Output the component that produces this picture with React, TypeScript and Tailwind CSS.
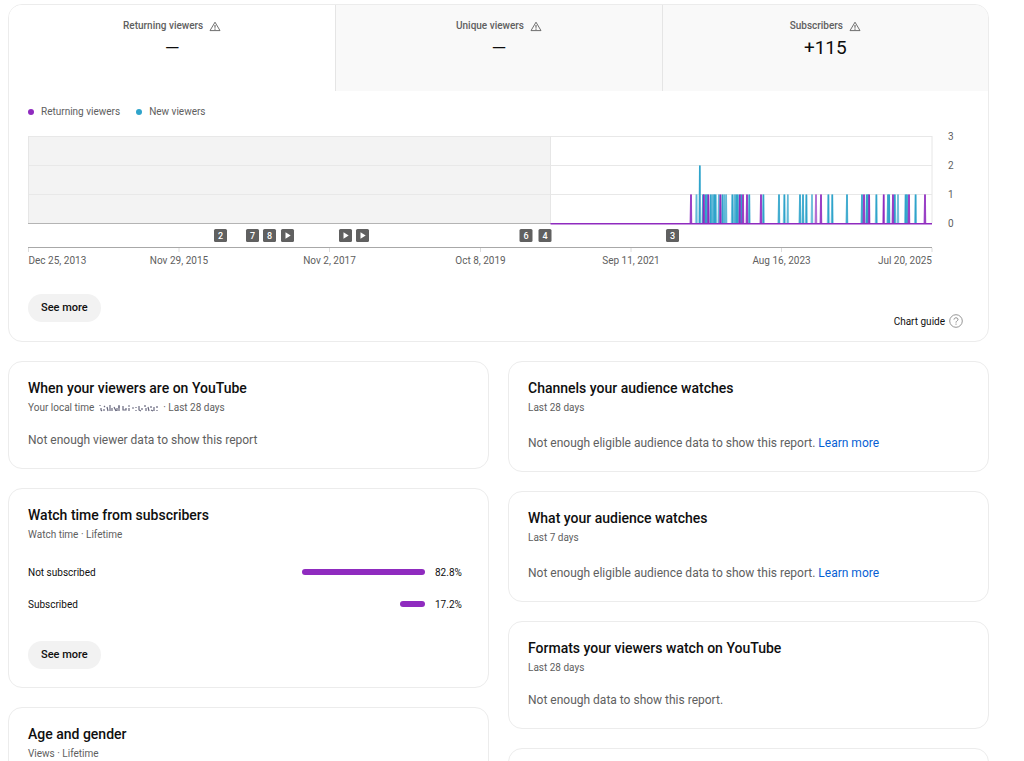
import type { ReactNode } from "react";

const PURPLE = "#8f2bbf";
const TEAL = "#2fa4cb";

type Spike = { x: number; v?: number; c: "p" | "t"; soft?: boolean };

const spikes: Spike[] = [
  { x: 663, c: "p" },
  { x: 668.5, c: "t", soft: true },
  { x: 671.8, c: "t", v: 2 },
  { x: 675, c: "t" },
  { x: 677.5, c: "t" },
  { x: 679, c: "t" },
  { x: 682.8, c: "t" },
  { x: 684.6, c: "t", soft: true },
  { x: 686.2, c: "t" },
  { x: 687.6, c: "t" },
  { x: 690.8, c: "t", soft: true },
  { x: 694.5, c: "t" },
  { x: 696.4, c: "t", soft: true },
  { x: 698.2, c: "t", soft: true },
  { x: 704.4, c: "t" },
  { x: 706.5, c: "t", soft: true },
  { x: 708.2, c: "t" },
  { x: 709.8, c: "t" },
  { x: 713.2, c: "t" },
  { x: 721.3, c: "t" },
  { x: 735.4, c: "t" },
  { x: 751, c: "t" },
  { x: 756.4, c: "t" },
  { x: 759.8, c: "t", soft: true },
  { x: 772, c: "t" },
  { x: 775, c: "t" },
  { x: 778.4, c: "t" },
  { x: 784, c: "t", soft: true },
  { x: 800.4, c: "t" },
  { x: 804.3, c: "t" },
  { x: 819, c: "t" },
  { x: 834, c: "t" },
  { x: 838.7, c: "t" },
  { x: 840, c: "t" },
  { x: 848.4, c: "t" },
  { x: 860, c: "t" },
  { x: 861.2, c: "t" },
  { x: 866.8, c: "t" },
  { x: 870, c: "t", soft: true },
  { x: 877.6, c: "t" },
  { x: 879, c: "t" },
  { x: 887.6, c: "t" },
  { x: 675.8, c: "p" },
  { x: 680.4, c: "p" },
  { x: 692.4, c: "p" },
  { x: 711.8, c: "p" },
  { x: 715, c: "p" },
  { x: 719, c: "p" },
  { x: 733, c: "p" },
  { x: 788, c: "p", soft: true },
  { x: 793, c: "p" },
  { x: 836, c: "p" },
  { x: 841.2, c: "p" },
  { x: 855.7, c: "p" },
  { x: 865, c: "p" },
  { x: 881, c: "p" },
  { x: 897, c: "p" },
];

const markers: { x: number; label?: string }[] = [
  { x: 192.5, label: "2" },
  { x: 224.5, label: "7" },
  { x: 241.5, label: "8" },
  { x: 259.5 },
  { x: 317.5 },
  { x: 334.5 },
  { x: 498, label: "6" },
  { x: 517, label: "4" },
  { x: 644.5, label: "3" },
];

const ticks: { x: number; label: string; anchor: "start" | "middle" | "end" }[] = [
  { x: 0.5, label: "Dec 25, 2013", anchor: "start" },
  { x: 151, label: "Nov 29, 2015", anchor: "middle" },
  { x: 301.5, label: "Nov 2, 2017", anchor: "middle" },
  { x: 452.5, label: "Oct 8, 2019", anchor: "middle" },
  { x: 603, label: "Sep 11, 2021", anchor: "middle" },
  { x: 753.5, label: "Aug 16, 2023", anchor: "middle" },
  { x: 904, label: "Jul 20, 2025", anchor: "end" },
];

const BASE = 93.5;
const UNIT = 29;

function Chart() {
  return (
    <svg viewBox="0 0 941 140" className="block w-full" role="img" aria-label="Returning and new viewers over time">
      <rect x="0" y="6" width="523" height="87" fill="#f3f3f3" />
      {[1, 2, 3].map((v) => (
        <line key={v} x1="0" x2="904" y1={BASE - v * UNIT} y2={BASE - v * UNIT} stroke="#e8e8e8" />
      ))}
      <path d="M0.5 6V93M522.5 6V93M904 6V93" stroke="#e6e6e6" fill="none" />
      <line x1="0" x2="523" y1={BASE} y2={BASE} stroke="#b4b4b4" />
      {spikes.map((s, i) => {
        const top = BASE - (s.v ?? 1) * UNIT;
        const color = s.c === "p" ? PURPLE : TEAL;
        return (
          <g key={i} fill={color} opacity={s.soft ? 0.75 : 1}>
            <path d={`M${s.x - 0.8} ${top}H${s.x + 0.8}V${BASE}H${s.x - 0.8}Z`} />
            <path d={`M${s.x - 0.8} ${top}L${s.x - 1.7} ${BASE}H${s.x + 1.4}L${s.x + 0.8} ${top}Z`} opacity="0.5" />
          </g>
        );
      })}
      <line x1="522.5" x2="904" y1="93.7" y2="93.7" stroke={PURPLE} strokeWidth="1.6" />
      {[0, 1, 2, 3].map((v) => (
        <text key={v} x="920" y={BASE - v * UNIT + 3.5} fontSize="10" fill="#606060">
          {v}
        </text>
      ))}
      {markers.map((m) => (
        <g key={m.x}>
          <rect x={m.x - 6.5} y="99" width="13" height="13" rx="1.5" fill="#606060" />
          {m.label ? (
            <text x={m.x} y="109" fontSize="9" fontWeight="500" textAnchor="middle" fill="#fff">
              {m.label}
            </text>
          ) : (
            <path d={`M${m.x - 2} 102.2V108.8L${m.x + 3.2} 105.5Z`} fill="#fff" />
          )}
        </g>
      ))}
      <line x1="0" x2="904" y1="117.5" y2="117.5" stroke="#a8a8a8" />
      {ticks.map((t) => (
        <g key={t.label}>
          <line x1={t.x} x2={t.x} y1="118" y2="122" stroke="#dcdcdc" />
          <text x={t.x} y="134" fontSize="10" textAnchor={t.anchor} fill="#606060">
            {t.label}
          </text>
        </g>
      ))}
    </svg>
  );
}

function WarningIcon() {
  return (
    <svg viewBox="0 0 12 11" className="h-[11px] w-3" fill="none" stroke="#606060" aria-hidden="true">
      <path d="M6 1.2L11 9.6H1Z" strokeWidth="0.9" />
      <path d="M6 4V6.8M6 7.6V8.7" strokeWidth="1.1" />
    </svg>
  );
}

function Tab({ label, value, active }: { label: string; value: string; active?: boolean }) {
  return (
    <button
      type="button"
      role="tab"
      aria-selected={!!active}
      className={
        active
          ? "flex h-[86px] flex-col items-center bg-white pt-[13px]"
          : "flex h-[86px] flex-col items-center border-l border-[#e5e5e5] bg-[#f9f9f9] pt-[13px]"
      }
    >
      <span className="flex items-center gap-1.5 text-[10px] leading-4 font-medium text-[#606060]">
        {label}
        <WarningIcon />
      </span>
      <span className="flex h-7 items-center text-[19px] leading-7 text-[#0d0d0d]">{value}</span>
    </button>
  );
}

function SeeMore() {
  return (
    <button type="button" className="h-7 rounded-full bg-[#f2f2f2] px-[13px] text-[11px] font-medium text-[#0f0f0f]">
      See more
    </button>
  );
}

function Card({ title, sub, children }: { title: string; sub: ReactNode; children?: ReactNode }) {
  return (
    <section className="shrink-0 rounded-[14px] border border-[#ececec] bg-white px-[19px] pt-4 pb-[18px]">
      <h2 className="text-sm leading-5 font-medium text-[#0f0f0f]">{title}</h2>
      <p className="mt-px text-[10px] leading-[18px] text-[#606060]">{sub}</p>
      {children}
    </section>
  );
}

function LearnMore() {
  return (
    <a href="#learn-more" className="text-[#065fd4]">
      Learn more
    </a>
  );
}

function Share({ label, value }: { label: string; value: number }) {
  return (
    <li className="flex h-8 items-center pr-1.5 text-[10px] text-[#0f0f0f]">
      <span className="flex-1">{label}</span>
      <span className="flex w-[148px] justify-end">
        <span className="h-1.5 rounded-full bg-[#8f2bbf]" style={{ width: `${value}%` }} />
      </span>
      <span className="ml-2.5 w-7">{value}%</span>
    </li>
  );
}

function Smudge() {
  return (
    <svg viewBox="0 0 60 10" className="mx-0.5 inline-block h-2.5 w-[60px] align-[-2px]" fill="none" stroke="#68687e" strokeWidth="1.2" aria-hidden="true">
      <path d="M1 2V3M2 5V7L3 8M5 6V8M5 3L6 4M8 4L9 8M11 2V8M13 5V8M15 4L17 8M18 5V8M20 2V8M19 4H21" />
      <path d="M24 3V7H27V5M29 3H31M30 5V8M33 5H35M37 4V5M37 7V8M40 3V7L42 8M43 5V7M46 2V4M47 5V8M49 4L50 8" />
      <path d="M52 3V5M52 7L54 8M55 4V8M58 3V5M58 7V8" />
    </svg>
  );
}

export default function App() {
  return (
    <main className="flex h-screen flex-col gap-[19px] overflow-hidden bg-white pt-1 pr-[35px] pl-2 font-['Roboto',sans-serif]">
      <section className="shrink-0 overflow-hidden rounded-[14px] border border-[#ececec]">
        <div role="tablist" className="grid grid-cols-3">
          <Tab label="Returning viewers" value="—" active />
          <Tab label="Unique viewers" value="—" />
          <Tab label="Subscribers" value="+115" />
        </div>
        <div className="px-[19px] pb-3">
          <ul className="flex gap-4 pt-[13px] pb-2.5 text-[10px] leading-4 text-[#606060]">
            <li className="flex items-center gap-[7px]">
              <span className="size-1.5 rounded-full bg-[#8f2bbf]" />
              Returning viewers
            </li>
            <li className="flex items-center gap-[7px]">
              <span className="size-1.5 rounded-full bg-[#2fa4cb]" />
              New viewers
            </li>
          </ul>
          <Chart />
          <div className="mt-6 flex items-start justify-between">
            <SeeMore />
            <a href="#chart-guide" className="mt-[19px] mr-1.5 flex h-4 items-center gap-1 text-[10px] text-[#0f0f0f]">
              Chart guide
              <svg viewBox="0 0 14 14" className="size-3.5" fill="none" stroke="#8a8a8a" aria-hidden="true">
                <circle cx="7" cy="7" r="6.3" strokeWidth="0.9" />
                <path d="M5 5.6C5 3.2 9 3.3 9 5.4C9 6.8 7 6.9 7 8.6M7 9.6V10.7" strokeWidth="1" />
              </svg>
            </a>
          </div>
        </div>
      </section>

      <div className="grid grid-cols-2 items-start gap-[19px]">
        <div className="flex flex-col gap-[19px]">
          <Card
            title="When your viewers are on YouTube"
            sub={
              <>
                Your local time <Smudge /> · Last 28 days
              </>
            }
          >
            <p className="mt-[13px] text-xs leading-5 text-[#606060]">Not enough viewer data to show this report</p>
          </Card>
          <Card title="Watch time from subscribers" sub="Watch time · Lifetime">
            <ul className="mt-3 mb-[21px]">
              <Share label="Not subscribed" value={82.8} />
              <Share label="Subscribed" value={17.2} />
            </ul>
            <SeeMore />
          </Card>
          <Card title="Age and gender" sub="Views · Lifetime" />
        </div>
        <div className="flex flex-col gap-[19px]">
          <Card title="Channels your audience watches" sub="Last 28 days">
            <p className="mt-4 text-xs leading-5 text-[#606060]">
              Not enough eligible audience data to show this report. <LearnMore />
            </p>
          </Card>
          <Card title="What your audience watches" sub="Last 7 days">
            <p className="mt-4 text-xs leading-5 text-[#606060]">
              Not enough eligible audience data to show this report. <LearnMore />
            </p>
          </Card>
          <Card title="Formats your viewers watch on YouTube" sub="Last 28 days">
            <p className="mt-[13px] text-xs leading-5 text-[#606060]">Not enough data to show this report.</p>
          </Card>
          <section className="h-28 shrink-0 rounded-[14px] border border-[#ececec]" />
        </div>
      </div>
    </main>
  );
}
